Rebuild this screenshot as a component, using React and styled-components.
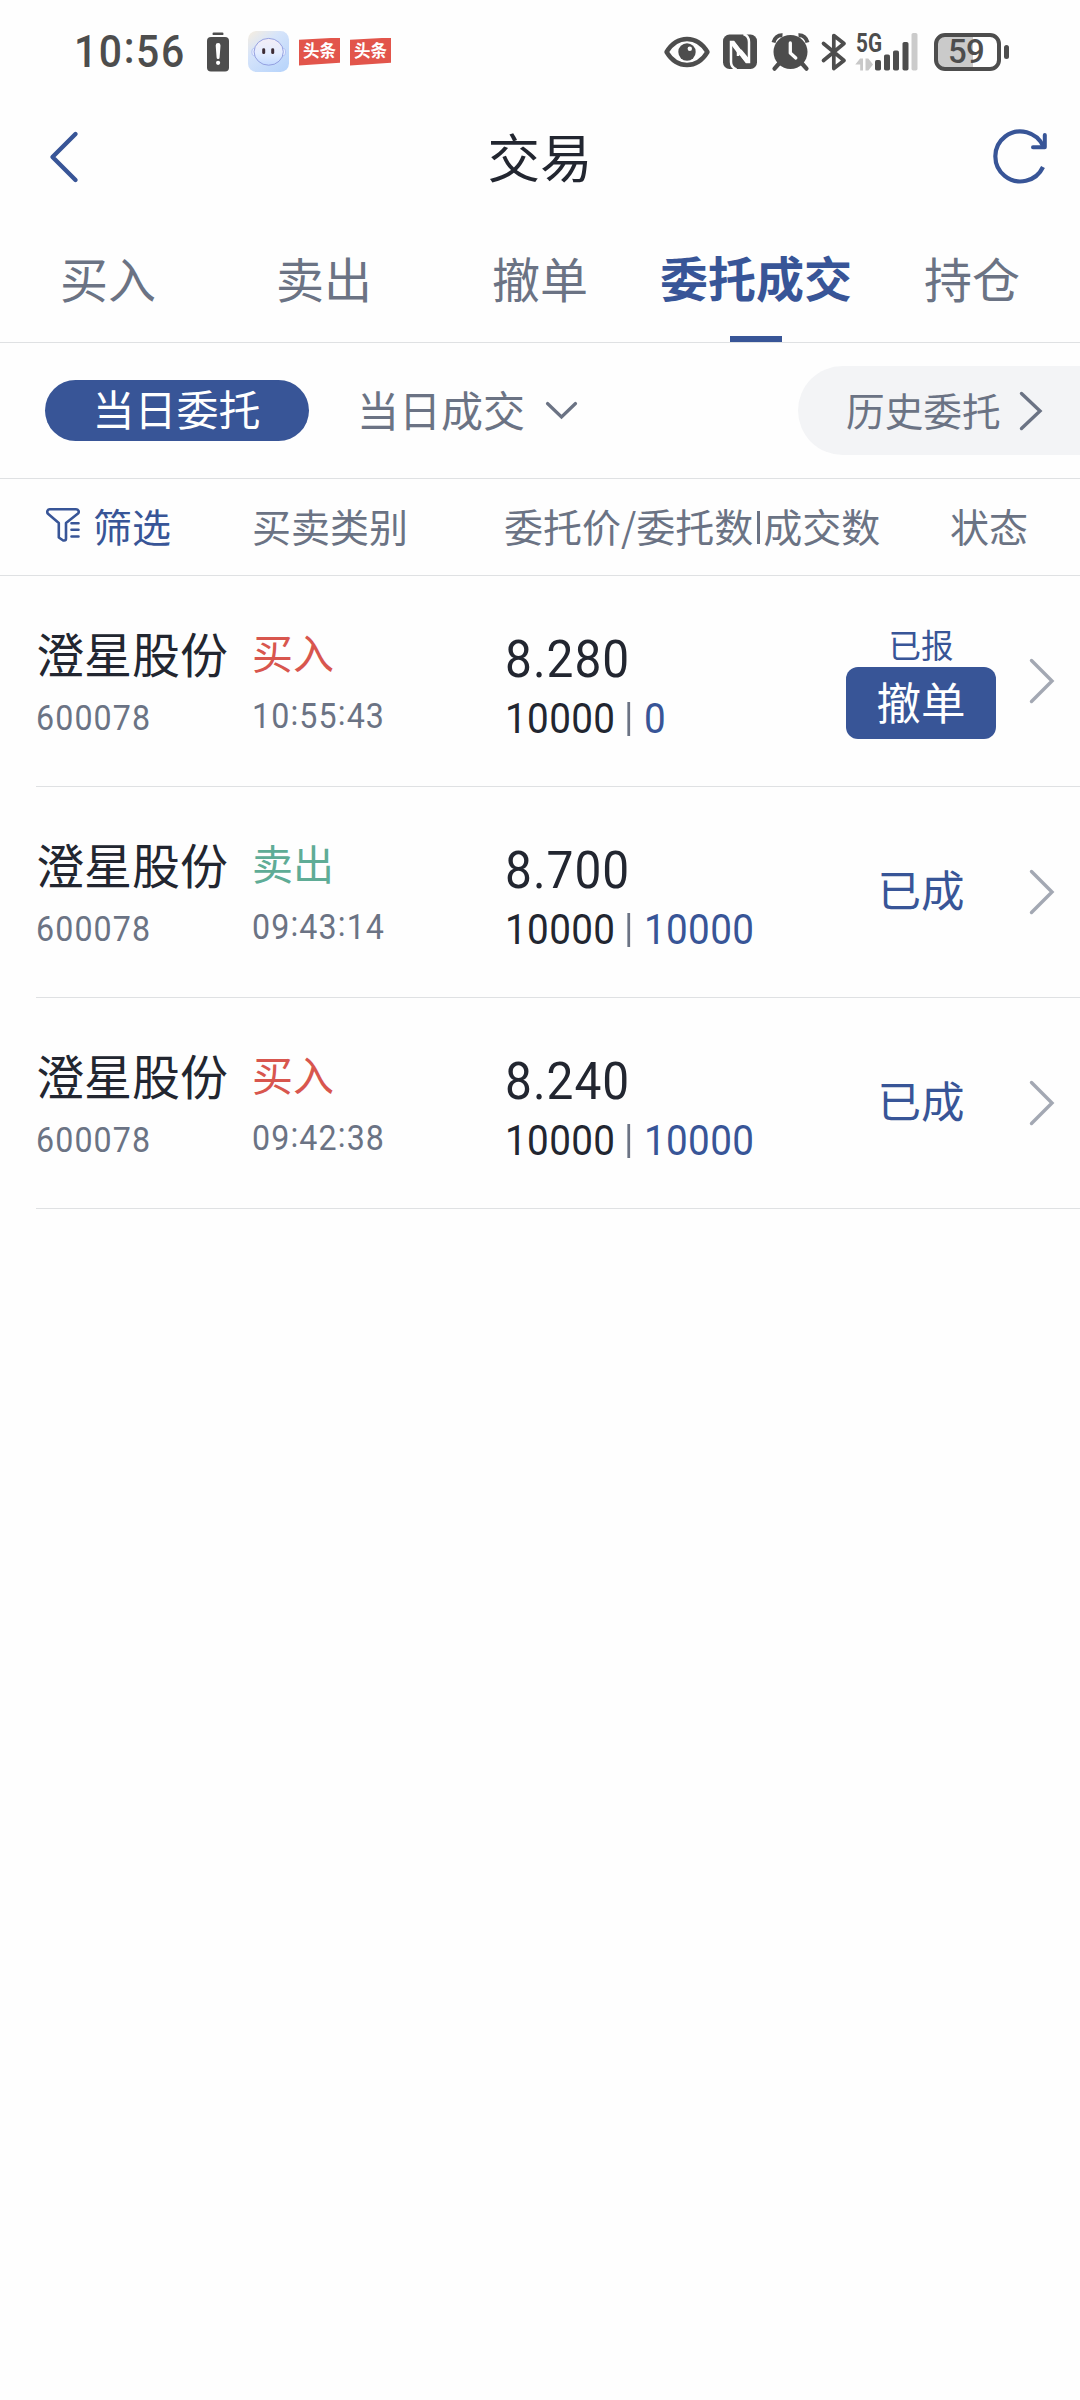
import React from "react";
import styled, { createGlobalStyle } from "styled-components";

const CJK = '"Noto Sans CJK SC", "Noto Sans", sans-serif';
const NUM = 'Roboto, "Noto Sans CJK SC", sans-serif';

const c = {
  blue: "#385597",
  ink: "#222630",
  gray: "#6b7384",
  light: "#a3a8b3",
  line: "#dfe1e3",
  red: "#d8564e",
  green: "#5fac96",
  status: "#4d4d4d",
};

const GlobalStyle = createGlobalStyle`
  * { box-sizing: border-box; }
  body { margin: 0; background: #fefefe; }
`;

const Screen = styled.main`
  width: 1080px;
  min-height: 2400px;
  display: flex;
  flex-direction: column;
  overflow: hidden;
  background: #fefefe;
  color: ${c.ink};
  font-family: ${CJK};
  white-space: nowrap;
`;

const StatusBar = styled.div`
  height: 103px;
  padding: 0 71px 0 74px;
  display: flex;
  align-items: center;
  justify-content: space-between;
  color: ${c.status};
`;

const StatusGroup = styled.div`
  display: flex;
  align-items: center;
  height: 42px;
`;

const Clock = styled.span`
  width: 133px;
  font: 500 44px/42px ${NUM};
  letter-spacing: 1.7px;
  transform: scaleX(0.93);
  transform-origin: left;
`;

const Colon = styled.span`
  position: relative;
  top: -0.08em;
`;

const Icon = styled.svg`
  display: block;
  flex: none;
  margin-left: ${(p) => p.$ml || 0}px;
  overflow: visible;
`;

const NewsBadge = styled.span`
  width: 41px;
  height: 28px;
  margin-left: 10px;
  background: #e2554b;
  clip-path: polygon(0 8%, 100% 0, 100% 90%, 0 100%);
  color: #fff;
  font: 700 16.5px/25px ${CJK};
  text-align: center;
`;

const Battery = styled.span`
  width: 67px;
  height: 38px;
  margin-left: 16px;
  padding-right: 3px;
  border: 4px solid ${c.status};
  border-radius: 11px;
  background: linear-gradient(90deg, #cacaca 35px, transparent 35px);
  font: 500 33px/29px ${NUM};
  letter-spacing: -0.8px;
  text-align: center;
`;

const BatteryCap = styled.span`
  width: 5px;
  height: 14px;
  margin-left: 3px;
  border-radius: 3px;
  background: ${c.status};
`;

const TitleBar = styled.header`
  height: 107px;
  padding: 0 32px 0 49px;
  display: grid;
  grid-template-columns: 1fr auto 1fr;
  align-items: center;
`;

const Title = styled.h1`
  margin: 0 17px 4px 0;
  font: 400 52.500px/60px ${CJK};
`;

const Refresh = styled.span`
  justify-self: end;
`;

const Tabs = styled.nav`
  height: 133px;
  display: grid;
  grid-template-columns: repeat(5, 1fr);
  border-bottom: 1px solid ${c.line};
`;

const Tab = styled.button`
  display: flex;
  flex-direction: column;
  align-items: center;
  justify-content: space-between;
  padding: ${(p) => (p.$active ? 34 : 35)}px 0 0;
  border: 0;
  background: none;
  color: ${(p) => (p.$active ? c.blue : c.gray)};
  font: ${(p) => (p.$active ? 700 : 400)} 48px/64px ${CJK};

  &::after {
    content: "";
    width: 52px;
    height: 6px;
    background: ${(p) => (p.$active ? c.blue : "transparent")};
  }
`;

const SubBar = styled.div`
  height: 136px;
  padding-left: 45px;
  display: flex;
  align-items: center;
  border-bottom: 1px solid ${c.line};
`;

const Pill = styled.button`
  width: 264px;
  height: 61px;
  padding: 0 1px 5px 0;
  border: 0;
  border-radius: 31px;
  background: ${c.blue};
  color: #fff;
  font: 400 42px/56px ${CJK};
`;

const DayDeals = styled.button`
  display: flex;
  align-items: center;
  margin-left: 48px;
  padding: 0;
  border: 0;
  background: none;
  color: ${c.gray};
  font: 400 42px/57px ${CJK};
`;

const Label = styled.span`
  padding-bottom: ${(p) => p.$lift || 0}px;
`;

const History = styled.button`
  width: 282px;
  height: 89px;
  margin-left: auto;
  padding: 0 0 0 48px;
  display: flex;
  align-items: center;
  border: 0;
  border-radius: 45px 0 0 45px;
  background: #f3f4f6;
  color: ${c.gray};
  font: 400 38.7px/57px ${CJK};
`;

const TableHead = styled.div`
  height: 97px;
  padding: 0 52px 4px 46px;
  display: grid;
  grid-template-columns: 206px 252px 1fr auto;
  align-items: center;
  border-bottom: 1px solid ${c.line};
  color: ${c.gray};
  font: 400 39px/56px ${CJK};
`;

const Filter = styled.span`
  display: flex;
  align-items: center;
  gap: 13px;
  color: ${c.blue};
`;

const PriceHead = styled.span`
  display: flex;
  align-items: center;
`;

const HeadBar = styled.i`
  width: 3px;
  height: 33px;
  margin: 4px 3px 0 4px;
  background: ${c.gray};
`;

const Order = styled.article`
  height: 211px;
  margin-left: 36px;
  padding-right: 26px;
  display: grid;
  grid-template-columns: 216px 253px 1fr 150px 58px;
  border-bottom: 1px solid ${c.line};
`;

const Cell = styled.div`
  display: flex;
  flex-direction: column;
  padding-top: ${(p) => p.$top}px;
`;

const Name = styled.span`
  font: 400 48px/60px ${CJK};
`;

const Condensed = styled.span`
  transform: scaleX(0.92);
  transform-origin: left;
`;

const Small = styled(Condensed)`
  margin-top: ${(p) => p.$mt}px;
  color: ${c.gray};
  font: 400 35px/40px ${NUM};
  letter-spacing: 1.2px;
`;

const Side = styled.span`
  color: ${(p) => (p.$sell ? c.green : c.red)};
  font: 400 41px/56px ${CJK};
`;

const Price = styled(Condensed)`
  font: 400 52px/60px ${NUM};
  letter-spacing: 1.1px;
`;

const Amounts = styled(Condensed)`
  display: flex;
  align-items: center;
  margin-top: 5px;
  font: 400 42px/48px ${NUM};
  letter-spacing: 0.4px;
`;

const Divider = styled.i`
  width: 3px;
  height: 34px;
  margin: 0 15px 0 13px;
  background: ${c.gray};
`;

const Done = styled.span`
  color: ${c.blue};
`;

const State = styled.div`
  display: flex;
  flex-direction: column;
  align-items: center;
  justify-content: ${(p) => (p.$done ? "center" : "flex-start")};
  padding: ${(p) => (p.$done ? "0 0 6px" : "45px 0 0")};
  color: ${c.blue};
  font: 400 ${(p) => (p.$done ? 43.5 : 32.5)}px/${(p) => (p.$done ? 60 : 46)}px ${CJK};
`;

const Cancel = styled.button`
  width: 150px;
  height: 72px;
  padding: 0 0 4px;
  border: 0;
  border-radius: 12px;
  background: ${c.blue};
  color: #fff;
  font: 400 44.5px/66px ${CJK};
`;

const Go = styled.span`
  display: flex;
  align-items: center;
  justify-content: flex-end;
`;

const Time = ({ value }) =>
  value.split(":").map((part, i) => (
    <React.Fragment key={i}>
      {i > 0 && <Colon>:</Colon>}
      {part}
    </React.Fragment>
  ));

const LowBattery = () => (
  <Icon width="22" height="40" viewBox="0 0 22 40" fill={c.status}>
    <rect x="5.5" y="0.5" width="11" height="2.6" rx="1.2" />
    <rect x="0" y="5" width="22" height="34.5" rx="4" />
    <path d="M8.7 13.5a2.4 2.4 0 0 1 4.8 0l-.9 12a1.5 1.5 0 0 1-3 0z" fill="#fff" />
    <circle cx="11.1" cy="30.8" r="2.1" fill="#fff" />
  </Icon>
);

const Robot = () => (
  <Icon $ml={19} width="41" height="41" viewBox="0 0 41 41">
    <defs>
      <linearGradient id="robotBg" x1="0" y1="0" x2="0.8" y2="1">
        <stop offset="0" stopColor="#f7eedf" />
        <stop offset="0.4" stopColor="#d6e4fa" />
        <stop offset="1" stopColor="#b9d5fb" />
      </linearGradient>
      <linearGradient id="robotFace" x1="0" y1="0" x2="0" y2="1">
        <stop offset="0" stopColor="#f3eef6" />
        <stop offset="0.55" stopColor="#e3ecff" />
        <stop offset="1" stopColor="#c4dbff" />
      </linearGradient>
    </defs>
    <rect width="41" height="41" rx="8.5" fill="url(#robotBg)" />
    <ellipse cx="5.8" cy="21" rx="2" ry="3.6" fill="#e8eeff" stroke="#a4b4f0" strokeWidth="0.7" />
    <ellipse cx="35.6" cy="21" rx="2" ry="3.6" fill="#e8eeff" stroke="#a4b4f0" strokeWidth="0.7" />
    <ellipse cx="20.7" cy="20.8" rx="14.6" ry="13.4" fill="url(#robotFace)" stroke="#8d98dc" strokeWidth="0.9" />
    <rect x="14.2" y="17.3" width="3" height="5.8" rx="1.4" fill="#3d2c35" />
    <rect x="23.2" y="17.3" width="3" height="5.8" rx="1.4" fill="#3d2c35" />
  </Icon>
);

const Eye = () => (
  <Icon width="46" height="32" viewBox="0 0 46 32" fill="none">
    <path
      d="M2.5 16C8 7 15 3 23 3s15 4 20.5 13C38 25 31 29 23 29S8 25 2.5 16z"
      stroke={c.status}
      strokeWidth="4.4"
      strokeLinejoin="round"
    />
    <circle cx="23" cy="16" r="8.7" fill={c.status} />
    <circle cx="25.8" cy="12.8" r="2.2" fill="#fefefe" />
  </Icon>
);

const Nfc = () => (
  <Icon $ml={13} width="34" height="36" viewBox="0 0 34 36" fill="none">
    <rect y="0.5" width="34" height="34.5" rx="6.5" fill={c.status} />
    <path
      d="M13.5 35.500C9.500 34 8 31.500 8 28V8H10.500L18.500 18.500M20.500 0C24.500 1.500 26 4.500 26 8V28H23.500L15 17V22"
      stroke="#fefefe"
      strokeWidth="2.500"
    />
    <path d="M8 7.500h3.200L19.500 18l-4 2.500L9 12zM26 28.500h-3.200L14.500 18l4-2.500L25.500 24z" fill="#fefefe" />
  </Icon>
);

const Alarm = () => (
  <Icon $ml={15} width="37" height="38" viewBox="0 0 37 38" fill="none">
    <path d="M7.5 30l-5 5.700M29.500 30l5 5.700" stroke={c.status} strokeWidth="4.200" strokeLinecap="round" />
    <circle cx="18.500" cy="19" r="17" fill={c.status} />
    <path d="M1.500 9.500C2.500 5 6 2 10.500 2.300M35.500 9.500C34.500 5 31 2 26.500 2.300" stroke={c.status} strokeWidth="4" />
    <path d="M18.300 10v10l5.500 5" stroke="#fefefe" strokeWidth="3.300" strokeLinecap="round" strokeLinejoin="round" />
  </Icon>
);

const Bluetooth = () => (
  <Icon $ml={13} width="25" height="38" viewBox="0 0 25 38" fill="none">
    <path
      d="M1.500 10.500L22 27.500 11.800 35.500V2.500L22 10.500 1.500 27.500"
      stroke={c.status}
      strokeWidth="3.700"
      strokeLinecap="round"
      strokeLinejoin="round"
    />
  </Icon>
);

const Signal = () => (
  <Icon $ml={8} width="63" height="38" viewBox="0 0 63 38" fill={c.status}>
    <text x="1" y="18.800" fontFamily="Roboto, sans-serif" fontWeight="700" fontSize="25.500" textLength="26" lengthAdjust="spacingAndGlyphs">
      5G
    </text>
    <path d="M.3 31.500l4.800-6H8v12H5.200v-6zM10.500 25.500h2.800l4.700 6-4.700 6h-2.800z" fill="#c8c8c8" />
    <rect x="20" y="27" width="6" height="10.500" rx="1.800" />
    <rect x="29" y="21.500" width="6" height="16" rx="1.800" />
    <rect x="38" y="17.500" width="6" height="20" rx="1.800" />
    <rect x="47.500" y="9" width="6" height="28.500" rx="1.800" />
    <rect x="56.500" y="0" width="6" height="37.500" rx="1.800" fill="#cbcbcb" />
  </Icon>
);

const BackIcon = () => (
  <Icon width="30" height="52" viewBox="0 0 30 52" fill="none">
    <path d="M26.500 3L3.500 26 26.500 49" stroke={c.blue} strokeWidth="4.400" strokeLinecap="round" strokeLinejoin="round" />
  </Icon>
);

const RefreshIcon = () => (
  <Icon width="55" height="55" viewBox="0 0 55 55" fill="none" stroke={c.blue}>
    <path d="M50 38A25 25 0 1 1 50.300 17.500" strokeWidth="4.200" />
    <path d="M51.800 6v12.300H40" strokeWidth="4" strokeLinecap="round" strokeLinejoin="round" />
  </Icon>
);

const FunnelIcon = () => (
  <Icon width="34" height="34" viewBox="0 0 34 34" fill="none" stroke={c.blue} strokeWidth="2.600" strokeLinecap="round" strokeLinejoin="round">
    <path d="M20 27v3.500q0 2-1.800 2h-1L12.800 29.500V15L2 5.800Q.8 4.500 1.500 2.800T4 1.300h26q1.800 0 2.500 1.500T32 5.600L20 15v12" />
    <path d="M25.500 15.300h7M25.500 21.800h7M25.500 28.500h7" />
  </Icon>
);

const Chevron = ({ w, h, color, stroke, ml }) => (
  <Icon $ml={ml} width={w} height={h} viewBox={`0 0 ${w} ${h}`} fill="none">
    <path
      d={w > h ? `M1.5 1.5L${w / 2} ${h - 2}L${w - 1.5} 1.5` : `M1.5 1.5L${w - 2} ${h / 2}L1.5 ${h - 1.5}`}
      stroke={color}
      strokeWidth={stroke}
      strokeLinecap="round"
    />
  </Icon>
);

const tabs = ["买入", "卖出", "撤单", "委托成交", "持仓"];

const orders = [
  { side: "买入", time: "10:55:43", price: "8.280", qty: "10000", done: "0" },
  { side: "卖出", time: "09:43:14", price: "8.700", qty: "10000", done: "10000" },
  { side: "买入", time: "09:42:38", price: "8.240", qty: "10000", done: "10000" },
];

export default function App() {
  return (
    <Screen>
      <GlobalStyle />
      <StatusBar>
        <StatusGroup>
          <Clock>
            <Time value="10:56" />
          </Clock>
          <LowBattery />
          <Robot />
          <NewsBadge>头条</NewsBadge>
          <NewsBadge>头条</NewsBadge>
        </StatusGroup>
        <StatusGroup>
          <Eye />
          <Nfc />
          <Alarm />
          <Bluetooth />
          <Signal />
          <Battery>59</Battery>
          <BatteryCap />
        </StatusGroup>
      </StatusBar>

      <TitleBar>
        <BackIcon />
        <Title>交易</Title>
        <Refresh>
          <RefreshIcon />
        </Refresh>
      </TitleBar>

      <Tabs>
        {tabs.map((t) => (
          <Tab key={t} $active={t === "委托成交"}>
            {t}
          </Tab>
        ))}
      </Tabs>

      <SubBar>
        <Pill>当日委托</Pill>
        <DayDeals>
          <Label $lift={5}>当日成交</Label>
          <Chevron w={31} h={17} color={c.gray} stroke={3.2} ml={21} />
        </DayDeals>
        <History>
          <Label $lift={3}>历史委托</Label>
          <Chevron w={22} h={38} color={c.gray} stroke={3.4} ml={19} />
        </History>
      </SubBar>

      <TableHead>
        <Filter>
          <FunnelIcon />
          筛选
        </Filter>
        <span>买卖类别</span>
        <PriceHead>
          委托价/委托数
          <HeadBar />
          成交数
        </PriceHead>
        <span>状态</span>
      </TableHead>

      {orders.map((o) => (
        <Order key={o.time}>
          <Cell $top={46}>
            <Name>澄星股份</Name>
            <Small $mt={17}>600078</Small>
          </Cell>
          <Cell $top={47}>
            <Side $sell={o.side === "卖出"}>{o.side}</Side>
            <Small $mt={18}>
              <Time value={o.time} />
            </Small>
          </Cell>
          <Cell $top={54}>
            <Price>{o.price}</Price>
            <Amounts>
              {o.qty}
              <Divider />
              <Done>{o.done}</Done>
            </Amounts>
          </Cell>
          {o.done === "0" ? (
            <State>
              已报
              <Cancel>撤单</Cancel>
            </State>
          ) : (
            <State $done>已成</State>
          )}
          <Go>
            <Chevron w={24} h={44} color={c.light} stroke={3.4} />
          </Go>
        </Order>
      ))}
    </Screen>
  );
}
